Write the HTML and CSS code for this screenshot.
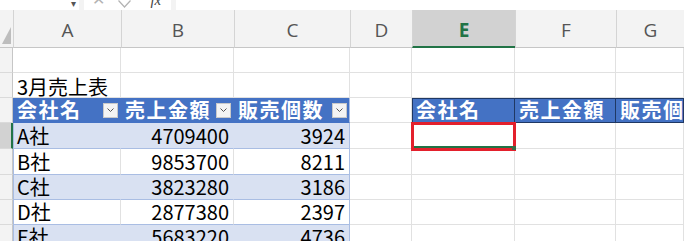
FILE: index.html
```html
<!DOCTYPE html>
<html lang="ja">
<head>
  <meta charset="UTF-8">
  <title>3月売上表</title>
  <link rel="stylesheet" href="styles.css">
</head>
<body>
  <div class="topbar">
    <div class="namebox"><span class="caret">&#x25BE;</span></div>
    <div class="fnbox">
      <span class="fn-ico">&#x2715;</span>
      <span class="fn-ico chk"><svg width="13" height="8" viewBox="0 0 13 8"><polyline points="0.5,0.5 6.5,7 12.5,0.5" fill="none" stroke="#b3b3b3" stroke-width="1.2"/></svg></span>
      <span class="fn-ico fx">fx</span>
    </div>
    <div class="formula"></div>
  </div>

  <div class="sheet">
    <div class="row colhead">
      <div class="corner"><svg width="9" height="17" viewBox="0 0 9 17"><polygon points="9,0 9,17 0,17" fill="#bdbdbd"/></svg></div>
      <div class="ch">A</div>
      <div class="ch">B</div>
      <div class="ch">C</div>
      <div class="ch">D</div>
      <div class="ch active">E</div>
      <div class="ch">F</div>
      <div class="ch">G</div>
    </div>

    <div class="row r25">
      <div class="rh"></div>
      <div class="c"></div><div class="c"></div><div class="c"></div><div class="c"></div><div class="c"></div><div class="c"></div><div class="c"></div>
    </div>

    <div class="row r25">
      <div class="rh"></div>
      <div class="c title">3月売上表</div><div class="c"></div><div class="c"></div><div class="c"></div><div class="c"></div><div class="c"></div><div class="c"></div>
    </div>

    <div class="row r25">
      <div class="rh"></div>
      <div class="c th">会社名<span class="filter"><svg width="7" height="4" viewBox="0 0 7 4"><polyline points="0.5,0.5 3.5,3.5 6.5,0.5" fill="none" stroke="#555" stroke-width="1"/></svg></span></div>
      <div class="c th">売上金額<span class="filter"><svg width="7" height="4" viewBox="0 0 7 4"><polyline points="0.5,0.5 3.5,3.5 6.5,0.5" fill="none" stroke="#555" stroke-width="1"/></svg></span></div>
      <div class="c th last">販売個数<span class="filter"><svg width="7" height="4" viewBox="0 0 7 4"><polyline points="0.5,0.5 3.5,3.5 6.5,0.5" fill="none" stroke="#555" stroke-width="1"/></svg></span></div>
      <div class="c"></div>
      <div class="c hd first">会社名</div>
      <div class="c hd">売上金額</div>
      <div class="c hd">販売個数</div>
    </div>

    <div class="row r26">
      <div class="rh active"></div>
      <div class="c td band">A社</div>
      <div class="c td band num">4709400</div>
      <div class="c td band num last">3924</div>
      <div class="c"></div>
      <div class="c selected"></div>
      <div class="c"></div><div class="c"></div>
    </div>

    <div class="row r26">
      <div class="rh"></div>
      <div class="c td">B社</div>
      <div class="c td num">9853700</div>
      <div class="c td num last">8211</div>
      <div class="c"></div><div class="c"></div><div class="c"></div><div class="c"></div>
    </div>

    <div class="row r25">
      <div class="rh"></div>
      <div class="c td band">C社</div>
      <div class="c td band num">3823280</div>
      <div class="c td band num last">3186</div>
      <div class="c"></div><div class="c"></div><div class="c"></div><div class="c"></div>
    </div>

    <div class="row r25">
      <div class="rh"></div>
      <div class="c td">D社</div>
      <div class="c td num">2877380</div>
      <div class="c td num last">2397</div>
      <div class="c"></div><div class="c"></div><div class="c"></div><div class="c"></div>
    </div>

    <div class="row r25">
      <div class="rh"></div>
      <div class="c td band">E社</div>
      <div class="c td band num">5683220</div>
      <div class="c td band num last">4736</div>
      <div class="c"></div><div class="c"></div><div class="c"></div><div class="c"></div>
    </div>
  </div>
</body>
</html>
```

FILE: styles.css
```css
:root {
  --grid: #e1e1e1;
  --head-bg: #f3f3f3;
  --head-line: #d4d4d4;
  --tbl-blue: #4472c4;
  --tbl-band: #d9e1f2;
  --tbl-line: #a9bde3;
  --xl-green: #217346;
}
body {
  margin: 0;
  width: 684px;
  height: 241px;
  overflow: hidden;
  background: #fff;
  font-family: "Noto Sans CJK JP", "Noto Sans", sans-serif;
}

/* formula bar (cut off at the top) */
.topbar {
  display: flex;
  height: 10px;
  background: var(--head-bg);
  gap: 5px;
}
.namebox, .fnbox, .formula {
  background: #fff;
  height: 10px;
  overflow: hidden;
  display: flex;
  align-items: flex-end;
}
.namebox {
  width: 79px;
  justify-content: flex-end;
  padding-right: 3px;
  box-sizing: border-box;
}
.caret {
  font-size: 10px;
  line-height: 14px;
  color: #555;
}
.fnbox {
  width: 87px;
  gap: 13px;
  padding-left: 8px;
  box-sizing: border-box;
}
.fn-ico {
  font-family: "DejaVu Sans", sans-serif;
  font-size: 16px;
  line-height: 20px;
  color: #b3b3b3;
  display: flex;
  align-items: flex-end;
}
.chk {
  padding-bottom: 2px;
}
.fx {
  font-family: "Liberation Serif", serif;
  font-style: italic;
  font-size: 15px;
  color: #444;
  margin-left: 6px;
}
.formula {
  flex: 1;
}

/* sheet grid */
.row {
  display: grid;
  grid-template-columns: 13px 108px 113px 116px 62px 103px 101px 68px;
}
.r25 { height: 25px; }
.r26 { height: 26px; }

.colhead {
  height: 38px;
  background: var(--head-bg);
}
.corner {
  display: flex;
  align-items: flex-end;
  justify-content: flex-end;
  padding: 0 2px 3px 0;
  border-bottom: 1px solid #c6c6c6;
}
.ch {
  border-left: 1px solid var(--head-line);
  border-bottom: 1px solid #c6c6c6;
  display: flex;
  align-items: center;
  justify-content: center;
  padding-top: 3px;
  font-family: "Open Sans", "Noto Sans", sans-serif;
  font-size: 19px;
  color: #555;
}
.ch.active {
  background: #d2d2d2;
  color: var(--xl-green);
  font-weight: 700;
  border-bottom: 2px solid var(--xl-green);
}

.rh {
  background: var(--head-bg);
  border-bottom: 1px solid #dadada;
  border-right: 1px solid #c6c6c6;
}
.rh.active {
  background: #d2d2d2;
  border-right: 2px solid var(--xl-green);
}

.c {
  border-right: 1px solid var(--grid);
  border-bottom: 1px solid var(--grid);
  display: flex;
  align-items: center;
  padding: 0 4px;
  font-size: 20px;
  line-height: 24px;
  color: #000;
  white-space: nowrap;
  overflow: hidden;
  min-width: 0;
}
.title {
  padding-top: 3px;
}

/* table A3:C8 */
.th {
  background: var(--tbl-blue);
  border-right-color: var(--tbl-blue);
  border-bottom-color: var(--tbl-blue);
  color: #fff;
  font-weight: 700;
  letter-spacing: 1.5px;
  justify-content: space-between;
  padding-right: 2px;
}
.filter {
  width: 15px;
  height: 15px;
  box-sizing: border-box;
  background: #f4f4f4;
  border: 1px solid #c9c9c9;
  display: flex;
  align-items: center;
  justify-content: center;
  flex: none;
}
.td {
  border-bottom-color: var(--tbl-line);
}
.row > .td:nth-child(2) {
  box-shadow: inset 1px 0 0 var(--tbl-line);
}
.band {
  background: var(--tbl-band);
  border-right-color: var(--tbl-band);
}
.num {
  justify-content: flex-end;
}
.last,
.th.last {
  border-right-color: var(--tbl-line);
}

/* copied header E3:G3 */
.hd {
  background: var(--tbl-blue);
  color: #fff;
  font-weight: 700;
  letter-spacing: 1.5px;
  border-right-color: #1f3864;
  border-bottom-color: #1f3864;
  box-shadow: inset 0 1px 0 #1f3864;
}
.hd.first {
  box-shadow: inset 1px 1px 0 #1f3864;
}

/* active cell E4 with red annotation */
.selected {
  position: relative;
  overflow: visible;
  box-shadow: inset 0 -2px 0 var(--xl-green);
}
.selected::after {
  content: "";
  position: absolute;
  left: -1px;
  top: -1px;
  right: -2px;
  bottom: -3px;
  border: 3px solid #e3202c;
}
.selected::before {
  content: "";
  position: absolute;
  right: -2px;
  bottom: -2px;
  width: 4px;
  height: 4px;
  background: #3a6b46;
  z-index: 1;
}
```
